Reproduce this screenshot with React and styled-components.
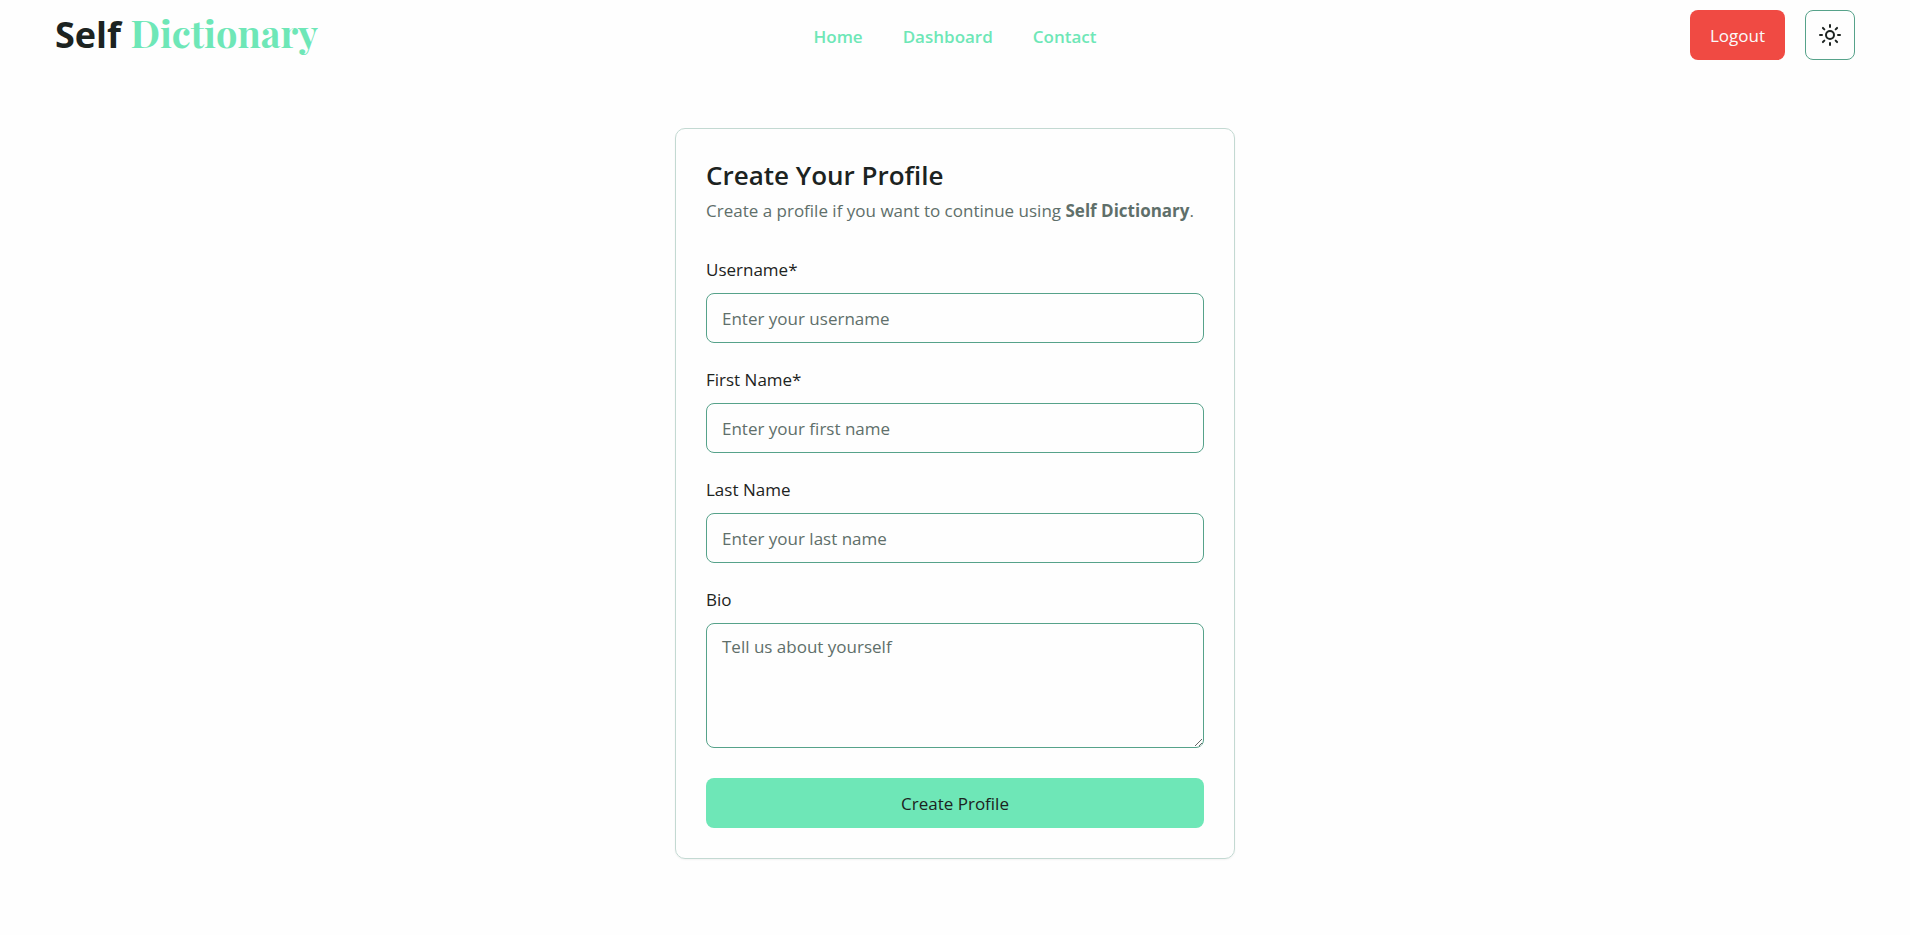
import React, { useState } from 'react';
import styled, { createGlobalStyle } from 'styled-components';
import { Sun } from 'lucide-react';

const GlobalStyle = createGlobalStyle`
  * {
    box-sizing: border-box;
  }

  body {
    margin: 0;
    background: #fefefe;
    color: #1c2321;
    font-family: 'Segoe UI', 'Open Sans', 'Noto Sans', sans-serif;
    font-size: 17px;
    line-height: 24px;
  }

  button, input, textarea {
    font: inherit;
  }
`;

const StyledHeader = styled.header`
  display: grid;
  grid-template-columns: 1fr auto 1fr;
  align-items: center;
  padding: 10px 55px;
`;

const Logo = styled.a`
  justify-self: start;
  color: #1c2321;
  font-size: 36px;
  font-weight: 700;
  line-height: 44px;
  text-decoration: none;

  span {
    color: #6ee7b7;
    font-family: 'Playfair Display', 'Liberation Serif', serif;
    font-size: 38px;
    line-height: 1;
  }
`;

const Nav = styled.nav`
  display: flex;
  gap: 40px;
  padding-top: 3px;

  a {
    color: #6ee7b7;
    font-weight: 600;
    text-decoration: none;
  }
`;

const Actions = styled.div`
  display: flex;
  justify-content: flex-end;
  gap: 20px;
`;

const Button = styled.button`
  height: 50px;
  padding: 2px 20px 0;
  border: 0;
  border-radius: 8px;
  background: #6ee7b7;
  color: #1c2321;
  cursor: pointer;
`;

const LogoutButton = styled(Button)`
  background: #f04a43;
  color: #fafafa;
`;

const ThemeButton = styled(Button)`
  display: flex;
  align-items: center;
  justify-content: center;
  width: 50px;
  padding: 0;
  border: 1px solid #56a28a;
  background: #fefefe;
`;

const Main = styled.main`
  display: flex;
  justify-content: center;
  padding: 58px 20px;
`;

const Card = styled.section`
  width: 100%;
  max-width: 560px;
  padding: 30px;
  border: 1px solid #c3d9d2;
  border-radius: 10px;
  box-shadow: 0 1px 2px rgba(0, 0, 0, 0.05);
`;

const Title = styled.h1`
  margin: 0 0 8px;
  font-size: 26px;
  font-weight: 600;
  line-height: 32px;
`;

const Description = styled.p`
  margin: 0 0 35px;
  color: #5f6f6a;
`;

const Form = styled.form`
  display: flex;
  flex-direction: column;
  gap: 25px;
`;

const Field = styled.div`
  display: flex;
  flex-direction: column;
  gap: 11px;
`;

const Input = styled.input`
  width: 100%;
  height: 50px;
  padding: 11px 15px;
  border: 1px solid #56a28a;
  border-radius: 8px;
  background: transparent;
  color: #1c2321;

  &::placeholder {
    color: #5f6f6a;
    opacity: 1;
  }
`;

const TextArea = styled(Input)`
  display: block;
  height: 125px;
  resize: vertical;
`;

const SubmitButton = styled(Button)`
  margin-top: 5px;
`;

const fields = [
  { name: 'username', label: 'Username*', placeholder: 'Enter your username' },
  { name: 'firstName', label: 'First Name*', placeholder: 'Enter your first name' },
  { name: 'lastName', label: 'Last Name', placeholder: 'Enter your last name' },
  {
    name: 'bio', label: 'Bio', placeholder: 'Tell us about yourself', multiline: true,
  },
];

const Header = () => (
  <StyledHeader>
    <Logo href="#home">
      Self
      {' '}
      <span>Dictionary</span>
    </Logo>
    <Nav>
      <a href="#home">Home</a>
      <a href="#dashboard">Dashboard</a>
      <a href="#contact">Contact</a>
    </Nav>
    <Actions>
      <LogoutButton type="button">Logout</LogoutButton>
      <ThemeButton type="button" aria-label="Toggle theme">
        <Sun size={24} />
      </ThemeButton>
    </Actions>
  </StyledHeader>
);

const ProfileForm = () => {
  const [profile, setProfile] = useState({
    username: '', firstName: '', lastName: '', bio: '',
  });

  const handleChange = (e) => {
    setProfile({ ...profile, [e.target.name]: e.target.value });
  };

  return (
    <Form onSubmit={(e) => e.preventDefault()}>
      {fields.map(({
        name, label, placeholder, multiline,
      }) => (
        <Field key={name}>
          <label htmlFor={name}>{label}</label>
          {multiline ? (
            <TextArea
              as="textarea"
              id={name}
              name={name}
              placeholder={placeholder}
              value={profile[name]}
              onChange={handleChange}
            />
          ) : (
            <Input
              id={name}
              name={name}
              placeholder={placeholder}
              value={profile[name]}
              onChange={handleChange}
            />
          )}
        </Field>
      ))}
      <SubmitButton type="submit">Create Profile</SubmitButton>
    </Form>
  );
};

const App = () => (
  <>
    <GlobalStyle />
    <Header />
    <Main>
      <Card>
        <Title>Create Your Profile</Title>
        <Description>
          Create a profile if you want to continue using
          {' '}
          <strong>Self Dictionary</strong>
          .
        </Description>
        <ProfileForm />
      </Card>
    </Main>
  </>
);

export default App;
